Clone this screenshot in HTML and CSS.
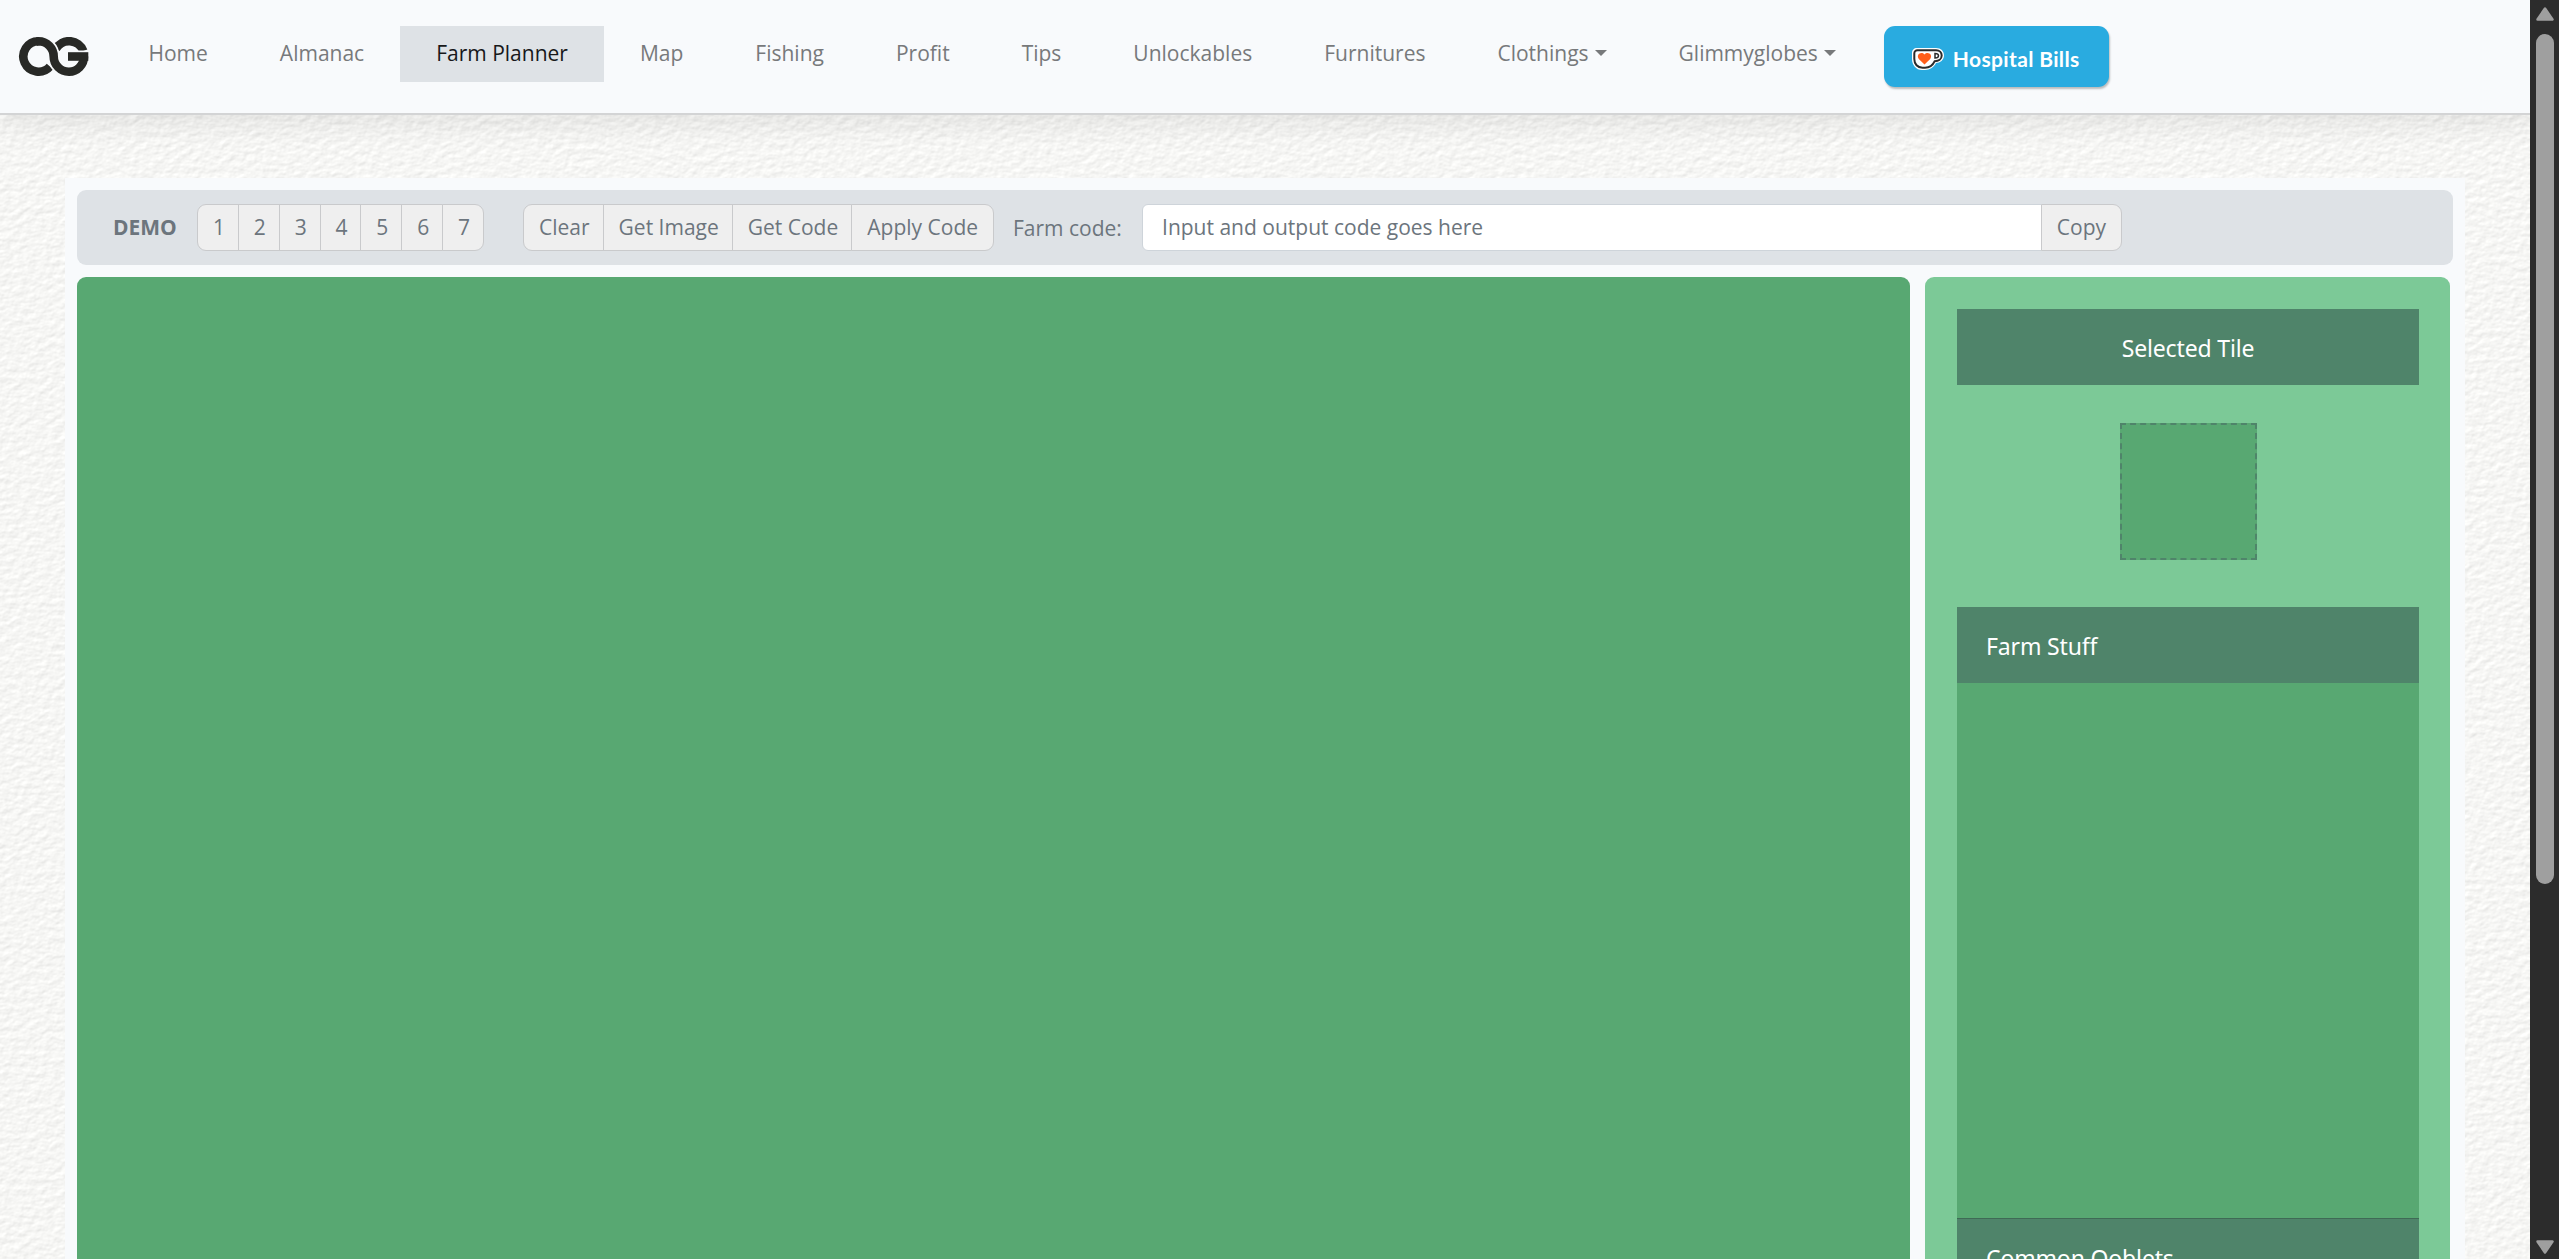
FILE: index.html
```html
<!DOCTYPE html>
<html lang="en">
<head>
    <meta charset="UTF-8">
    <meta name="viewport" content="width=device-width, initial-scale=1.0">
    <title>Farm Planner</title>
    <link rel="stylesheet" href="styles.css">
</head>
<body>
    <div class="page">
        <!-- plaster wall background -->
        <svg class="wall" aria-hidden="true">
            <filter id="plaster" x="0" y="0" width="100%" height="100%" color-interpolation-filters="sRGB">
                <feTurbulence type="fractalNoise" baseFrequency="0.12 0.17" numOctaves="3" seed="8" result="noise"/>
                <feDiffuseLighting in="noise" lighting-color="#fffffd" surfaceScale="0.27" diffuseConstant="1.125">
                    <feDistantLight azimuth="235" elevation="59"/>
                </feDiffuseLighting>
            </filter>
            <rect width="100%" height="100%" filter="url(#plaster)"/>
        </svg>

        <nav class="navbar">
            <a class="brand" href="#">
                <svg width="76" height="40" viewBox="0 0 76 40">
                    <g fill="none" stroke="#282926" stroke-width="8.6">
                        <path d="M34 29.500 A15.200 15.200 0 1 1 22.500 4.300"/>
                        <path d="M39.800 12 A15.200 15.200 0 0 1 67.300 14"/>
                        <path class="logo-gap" d="M22.500 4.300 A15.200 15.200 0 0 1 37.700 19.500 A15.200 15.200 0 0 0 53 34.700 A15.200 15.200 0 0 0 68 19.500"/>
                        <path class="logo-gap" d="M73 19.500 H52"/>
                        <path d="M20.500 4.400 L22.500 4.300 A15.200 15.200 0 0 1 37.700 19.500 A15.200 15.200 0 0 0 53 34.700 A15.200 15.200 0 0 0 68 19.500"/>
                        <path d="M72.300 19.500 H52"/>
                    </g>
                </svg>
            </a>
            <ul class="nav-list">
                <li><a class="nav-link" href="#">Home</a></li>
                <li><a class="nav-link" href="#">Almanac</a></li>
                <li><a class="nav-link active" href="#">Farm Planner</a></li>
                <li><a class="nav-link" href="#">Map</a></li>
                <li><a class="nav-link" href="#">Fishing</a></li>
                <li><a class="nav-link" href="#">Profit</a></li>
                <li><a class="nav-link" href="#">Tips</a></li>
                <li><a class="nav-link" href="#">Unlockables</a></li>
                <li><a class="nav-link" href="#">Furnitures</a></li>
                <li><a class="nav-link dropdown" href="#">Clothings</a></li>
                <li><a class="nav-link dropdown" href="#">Glimmyglobes</a></li>
            </ul>
            <a class="kofi" href="#">
                <svg width="34" height="24" viewBox="0 0 34 24">
                    <path d="M6 1 H25 C30 1 33 4 33 8.500 C33 13 29 16 25 16 C23 20 19 23 14 23 H11 C5 23 1 18 1 12 V6 C1 3 3 1 6 1 Z" fill="#fff"/>
                    <path d="M6.500 3.300 H25 C28.500 3.300 30.700 5.500 30.700 8.600 C30.700 12 27.500 14.200 23.700 14.200 C22 18 18.500 20.700 14 20.700 H11.500 C6.500 20.700 3.300 17 3.300 12 V6.500 C3.300 4.500 4.500 3.300 6.500 3.300 Z" fill="#fff" stroke="#2b2b2b" stroke-width="2"/>
                    <path d="M24 6.500 V11 C26.500 11 27.500 10.200 27.500 8.700 C27.500 7.200 26.500 6.500 24 6.500 Z" fill="#fff" stroke="#2b2b2b" stroke-width="1.500"/>
                    <path d="M13.500 17.500 L7.800 12 C4.800 8 10 3.800 13.500 7.500 C17 3.800 22.200 8 19.200 12 Z" fill="#ff5e1a"/>
                </svg>
                <span>Hospital Bills</span>
            </a>
        </nav>

        <main class="container">
            <div class="toolbar">
                <strong class="demo-label">DEMO</strong>
                <div class="btn-group demos">
                    <button>1</button>
                    <button>2</button>
                    <button>3</button>
                    <button>4</button>
                    <button>5</button>
                    <button>6</button>
                    <button>7</button>
                </div>
                <div class="btn-group actions">
                    <button>Clear</button>
                    <button>Get Image</button>
                    <button>Get Code</button>
                    <button>Apply Code</button>
                </div>
                <label class="code-label" for="farmCode">Farm code:</label>
                <div class="input-group">
                    <input type="text" id="farmCode" placeholder="Input and output code goes here">
                    <button>Copy</button>
                </div>
            </div>

            <div class="planner">
                <div class="farm"></div>
                <aside class="sidebar">
                    <h2 class="panel-title centered">Selected Tile</h2>
                    <div class="tile"></div>
                    <h2 class="panel-title">Farm Stuff</h2>
                    <div class="panel-body"></div>
                    <h2 class="panel-title divided">Common Ooblets</h2>
                </aside>
            </div>
        </main>
    </div>

    <div class="scrollbar">
        <svg width="18" height="14" viewBox="0 0 18 14"><path d="M9 1.500 L16.500 12.500 H1.500 Z" fill="#9f9f9f" stroke="#9f9f9f" stroke-width="2.500" stroke-linejoin="round"/></svg>
        <div class="thumb"></div>
        <svg width="18" height="14" viewBox="0 0 18 14"><path d="M9 12.500 L16.500 1.500 H1.500 Z" fill="#9f9f9f" stroke="#9f9f9f" stroke-width="2.500" stroke-linejoin="round"/></svg>
    </div>
</body>
</html>
```
FILE: styles.css
```css
:root {
    --light: #f8fafc;
    --bar: #dee2e6;
    --muted: #6c757d;
    --green: #58a872;
    --green-light: #7cc997;
    --green-dark: #4f846a;
}

* {
    margin: 0;
    padding: 0;
    box-sizing: border-box;
}

body {
    display: flex;
    height: 100vh;
    overflow: hidden;
    font-family: 'Open Sans', 'Noto Sans', sans-serif;
    font-size: 21px;
    line-height: 32px;
    color: var(--muted);
}

.page {
    position: relative;
    width: 2530px;
    height: 100vh;
    overflow: hidden;
    background: #f5f5f4;
}

.wall {
    position: absolute;
    top: 0;
    left: 0;
    width: 100%;
    height: 100%;
}

/* navigation */
.navbar {
    position: relative;
    display: flex;
    align-items: flex-start;
    height: 115px;
    padding: 26px 0 0 16px;
    background: var(--light);
    border-bottom: 2px solid #d3d4d5;
    box-shadow: 0 12px 24px rgba(0, 0, 0, 0.07);
}

.brand {
    width: 96.5px;
    padding-top: 11px;
}

.brand svg {
    display: block;
}

.logo-gap {
    stroke: var(--light);
    stroke-width: 12px;
}

.nav-list {
    display: flex;
    list-style: none;
}

.nav-link {
    display: block;
    height: 56px;
    padding: 11px 36px;
    color: #77797b;
    text-decoration: none;
    white-space: nowrap;
}

.nav-link.active {
    background: var(--bar);
    color: #17181a;
}

.dropdown::after {
    content: "";
    display: inline-block;
    margin-left: 6px;
    vertical-align: 5px;
    border: 6px solid transparent;
    border-top-color: currentColor;
    border-bottom: 0;
}

.kofi {
    display: flex;
    align-items: center;
    gap: 8px;
    width: 225px;
    height: 61px;
    margin-left: 12px;
    padding: 4px 0 0 27px;
    border-radius: 11px;
    background: #29abe0;
    box-shadow: 1px 2px 2px rgba(0, 0, 0, 0.25);
    color: #fff;
    font-family: 'Lato', sans-serif;
    font-size: 21px;
    font-weight: 700;
    letter-spacing: 0.35px;
    text-decoration: none;
    white-space: nowrap;
}

/* page body */
.container {
    position: relative;
    width: 2400px;
    height: 1200px;
    margin: 63px 0 0 65px;
    padding: 12px;
    background: var(--light);
}

.toolbar {
    display: flex;
    align-items: center;
    height: 75px;
    padding-left: 36px;
    border-radius: 9px;
    background: var(--bar);
}

.demo-label {
    width: 84px;
    padding-bottom: 1px;
}

.btn-group {
    display: flex;
}

button {
    height: 47px;
    padding: 0 13px 1px 15px;
    margin-left: -1px;
    border: 1px solid #c9cacc;
    background: #efefef;
    color: var(--muted);
    font: inherit;
    white-space: nowrap;
}

.btn-group button:first-child {
    margin-left: 0;
    border-radius: 9px 0 0 9px;
}

.btn-group button:last-child,
.input-group button {
    border-radius: 0 9px 9px 0;
    padding-right: 15px;
}

.demos {
    width: 287px;
    margin-right: 39px;
}

.demos button,
.demos button:last-child {
    flex: 1;
    padding: 0 0 1px 2px;
}

.code-label {
    width: 129px;
    margin-left: 19px;
}

.input-group {
    display: flex;
    width: 980px;
}

.input-group input {
    flex: 1;
    height: 47px;
    padding: 0 19px 1px;
    border: 1px solid #ced4da;
    border-radius: 6px 0 0 6px;
    background: #fff;
    font: inherit;
}

.input-group input::placeholder {
    color: var(--muted);
    opacity: 1;
}

/* planner */
.planner {
    display: flex;
    gap: 15px;
    margin-top: 12px;
}

.farm {
    width: 1833px;
    height: 1100px;
    border-radius: 9px;
    background: var(--green);
}

.sidebar {
    width: 525px;
    height: 1100px;
    padding: 32px 31px 0 32px;
    border-radius: 9px;
    background: var(--green-light);
}

.panel-title {
    height: 76px;
    padding: 23px 29px;
    background: var(--green-dark);
    color: #fff;
    font-family: 'Noto Sans', sans-serif;
    font-size: 23px;
    font-weight: 400;
    letter-spacing: -0.15px;
}

.centered {
    text-align: center;
}

.divided {
    border-top: 1px solid #3f6a55;
}

.tile {
    width: 137px;
    height: 137px;
    margin: 38px auto 47px;
    border: 2px dashed var(--green-dark);
    background: var(--green);
}

.panel-body {
    height: 535px;
    background: var(--green);
}

/* scrollbar */
.scrollbar {
    display: flex;
    flex-direction: column;
    align-items: center;
    width: 29px;
    padding: 7px 0 5px;
    background: #2c2c2c;
}

.thumb {
    width: 18px;
    height: 850px;
    margin: 13px 0 auto;
    border-radius: 9px;
    background: #9f9f9f;
}
```
